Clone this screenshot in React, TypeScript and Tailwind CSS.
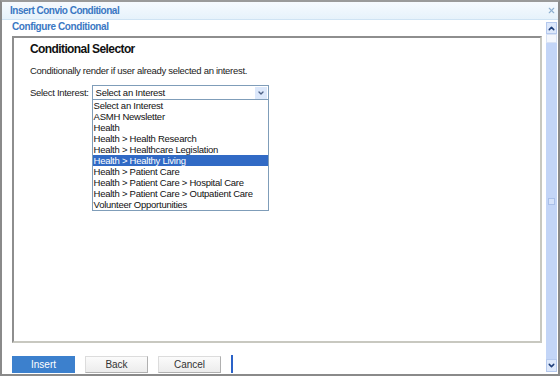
import { ChevronDown, ChevronUp, X } from "lucide-react";

const options = [
  "Select an Interest",
  "ASMH Newsletter",
  "Health",
  "Health > Health Research",
  "Health > Healthcare Legislation",
  "Health > Healthy Living",
  "Health > Patient Care",
  "Health > Patient Care > Hospital Care",
  "Health > Patient Care > Outpatient Care",
  "Volunteer Opportunities",
];

const Scrollbar = () => (
  <div className="flex w-[11px] flex-col bg-[#c3d5f7]">
    <div className="flex h-[12px] items-center justify-center border border-[#b5c9ee] bg-[#dde8fb]">
      <ChevronUp className="h-[9px] w-[9px] text-[#1f3f7a]" strokeWidth={4} />
    </div>
    <div className="h-[9px] border border-[#d8e2f4] bg-[#f4f7fd]" />
    <div className="flex flex-1 flex-col items-center justify-center">
      <div className="h-[7px] w-[7px] border border-[#a9bfe8] bg-[#d5e2fa]" />
    </div>
    <div className="flex h-[13px] items-center justify-center border border-[#b5c9ee] bg-[#dde8fb]">
      <ChevronDown className="h-[9px] w-[9px] text-[#1f3f7a]" strokeWidth={4} />
    </div>
  </div>
);

export default function App() {
  return (
    <div className="flex h-[376px] w-[560px] flex-col overflow-hidden border-2 border-[#8a8a8a] border-t-[#9a9a9a] bg-white font-['Liberation_Sans',Arial,sans-serif]">
      <div className="flex h-[18px] shrink-0 items-center justify-between border-b border-[#cfe3f3] bg-gradient-to-b from-[#f6fafe] to-[#e6f2fb] pl-[8px] pr-[2px]">
        <span className="text-[10px] font-bold tracking-[-0.5px] text-[#3b78c3]">Insert Convio Conditional</span>
        <X className="h-[9px] w-[9px] text-[#8fb0d0]" strokeWidth={3} />
      </div>
      <div className="flex flex-1">
        <div className="flex flex-1 flex-col pr-[4px]">
          <div className="h-[16px] pl-[10px] text-[10px] font-bold leading-[14px] tracking-[-0.4px] text-[#3b78c3]">
            Configure Conditional
          </div>
          <div className="relative ml-[10px] h-[307px] border-2 border-[#8e8e8e] border-b-[#c8c8c0] border-r-[#c8c8c0] px-[16px] pt-[3px]">
            <div className="text-[12px] font-bold leading-[16px] tracking-[-0.6px] text-[#111]">Conditional Selector</div>
            <div className="mt-[8px] text-[9.5px] leading-[12px] tracking-[-0.3px] text-[#222]">
              Conditionally render if user already selected an interest.
            </div>
            <div className="mt-[8px] flex items-center gap-[3px] text-[9.5px] tracking-[-0.3px] text-[#222]">
              <span className="leading-[14px]">Select Interest:</span>
              <div className="relative">
                <div className="flex h-[15px] w-[177px] items-center justify-between border border-[#7f9db9] pl-[3px] pr-[1px]">
                  <span className="text-[9.5px] leading-[13px] tracking-[-0.25px] text-[#111]">Select an Interest</span>
                  <div className="flex h-[12px] w-[12px] items-center justify-center bg-[#dce8fb]">
                    <ChevronDown className="h-[8px] w-[8px] text-[#4d6185]" strokeWidth={4} />
                  </div>
                </div>
                <div className="absolute left-0 top-[14px] flex w-[177px] flex-col border border-[#7f9db9] bg-white">
                  {options.map((o) => (
                    <div
                      key={o}
                      className={
                        o === "Health > Healthy Living"
                          ? "h-[11px] bg-[#316ac5] pl-[1px] text-[9.5px] leading-[11px] tracking-[-0.25px] text-white"
                          : "h-[11px] pl-[1px] text-[9.5px] leading-[11px] tracking-[-0.25px] text-[#111]"
                      }
                    >
                      {o}
                    </div>
                  ))}
                </div>
              </div>
            </div>
          </div>
          <div className="ml-[10px] mt-[12px] flex items-center gap-[10px]">
            <button className="h-[17px] w-[63px] bg-[#3c80cd] text-[10px] text-white">Insert</button>
            <button className="h-[17px] w-[63px] border border-[#dcdcdc] border-b-[#b0b0b0] border-r-[#b0b0b0] bg-gradient-to-b from-[#fbfbfb] to-[#ececec] text-[10px] text-[#333]">
              Back
            </button>
            <button className="h-[17px] w-[63px] border border-[#dcdcdc] border-b-[#b0b0b0] border-r-[#b0b0b0] bg-gradient-to-b from-[#fbfbfb] to-[#ececec] text-[10px] text-[#333]">
              Cancel
            </button>
            <div className="h-[18px] w-[2px] bg-[#2a62c8]" />
          </div>
        </div>
        <div className="flex pt-[2px] pr-[1px] pb-[2px]">
          <Scrollbar />
        </div>
      </div>
    </div>
  );
}
